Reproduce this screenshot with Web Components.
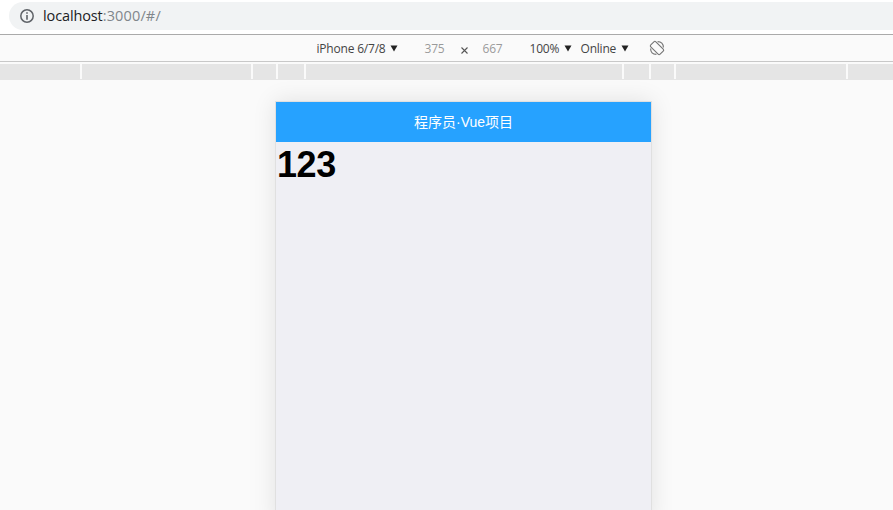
<!DOCTYPE html>
<html lang="zh">
<head>
<meta charset="utf-8">
<title>localhost:3000</title>
<style>
html,body{margin:0;height:100%;overflow:hidden;background:#fafafa}
</style>
</head>
<body>
<browser-window></browser-window>
<script>
const define = (name, markup) => customElements.define(name, class extends HTMLElement {
  constructor() {
    super();
    this.attachShadow({ mode: 'open' }).innerHTML = markup;
  }
});

define('address-bar', `
<style>
:host{display:block;height:34px;background:#fff;border-bottom:1px solid #aaa;padding-left:9px}
.row{padding-top:2px}
.pill{height:28px;box-sizing:border-box;background:#f1f3f4;border-radius:14px 0 0 14px;display:flex;align-items:center;padding-left:11px;gap:9px;color:#80868b;font:14.5px/28px "Open Sans","Noto Sans",sans-serif;letter-spacing:.15px}
svg{width:14px;height:14px;flex:none}
::slotted(b){letter-spacing:-.12px}
</style>
<div class="row"><div class="pill">
<svg viewBox="0 0 14 14"><circle cx="7" cy="7" r="6.2" fill="none" stroke="#5f6368" stroke-width="1.5"/><path d="M6.2 3.2h1.6v1.6H6.2zM6.2 6h1.6v4.8H6.2z" fill="#5f6368"/></svg>
<span><slot></slot></span></div></div>`);

define('drop-down', `
<style>
:host{display:flex;align-items:center;justify-content:space-between;color:#444}
svg{width:8px;height:7px;flex:none;margin-top:-2px}
</style>
<span><slot></slot></span><svg viewBox="0 0 8 7"><path d="M.5.5h7L4 6.5z" fill="#222"/></svg>`);

define('device-toolbar', `
<style>
:host{display:grid;grid-template-columns:81px 27px 21px 37px 21px 26px 42px 9px 48px 20px 16px;height:26px;align-items:center;padding-left:316.5px;border-bottom:1px solid #c8c8c8;background:#fafafa;font:12px/26px "Open Sans","Noto Sans",sans-serif;letter-spacing:-.2px;white-space:nowrap}
drop-down{padding-top:2px;height:26px;box-sizing:border-box}
.dim{color:#9a9a9a;height:26px;line-height:27px}
.w{grid-column:3}
.x{grid-column:4;display:flex;align-items:center;justify-content:center;height:26px;box-sizing:border-box;padding-top:5px}
.x svg{width:7px;height:7px}
.h{grid-column:5}.zoom{grid-column:7}.net{grid-column:9}
.rotate{grid-column:11;width:16px;height:16px}
</style>
<drop-down>iPhone 6/7/8</drop-down>
<span class="dim w">375</span><span class="x"><svg viewBox="0 0 7 7"><path d="M.5.5l6 6M6.5.5l-6 6" stroke="#555" stroke-width="1.1"/></svg></span><span class="dim h">667</span>
<drop-down class="zoom">100%</drop-down><drop-down class="net">Online</drop-down>
<svg class="rotate" viewBox="0 0 16 16" fill="none" stroke="#747474" stroke-width="1.1"><rect x="4.4" y="1.4" width="7.2" height="13.2" rx="1.4" transform="rotate(-45 8 8)"/><path d="M8.6 1.6C12.2 1.6 14.4 4 14.4 7.4M7.4 14.4C3.8 14.4 1.6 12 1.6 8.6"/></svg>`);

define('breakpoint-ruler', `
<style>
:host{display:grid;grid-template-columns:80px 169px 23px 26px 316px 25px 23px 170px 45px;column-gap:2px;height:15px;margin-top:2px;border-bottom:1px solid #e5e5e5}
i{background:#e5e5e5}
</style>${'<i></i>'.repeat(9)}`);

define('device-screen', `
<style>
:host{display:block;width:375px;height:420px;margin:21px 0 0 275px;border:1px solid #e0e0e0;background:#efeff4;box-shadow:0 0 22px rgba(0,0,0,.1)}
header{height:40px;background:#26a2ff;color:#fff;text-align:center;font:14px/40px "Liberation Sans","Noto Sans CJK SC",sans-serif}
h1{margin:0;padding-left:1px;color:#000;font:bold 36px/46px "Liberation Sans",sans-serif;letter-spacing:-.4px}
</style>
<header><slot name="title"></slot></header><h1><slot></slot></h1>`);

define('browser-window', `
<style>
:host{display:block;width:893px;height:510px;overflow:hidden;background:#fafafa}
b{font-weight:400;color:#202124}
</style>
<address-bar><b>localhost</b>:3000/#/</address-bar>
<device-toolbar></device-toolbar>
<breakpoint-ruler></breakpoint-ruler>
<device-screen><span slot="title">程序员·Vue项目</span>123</device-screen>`);
</script>
</body>
</html>
